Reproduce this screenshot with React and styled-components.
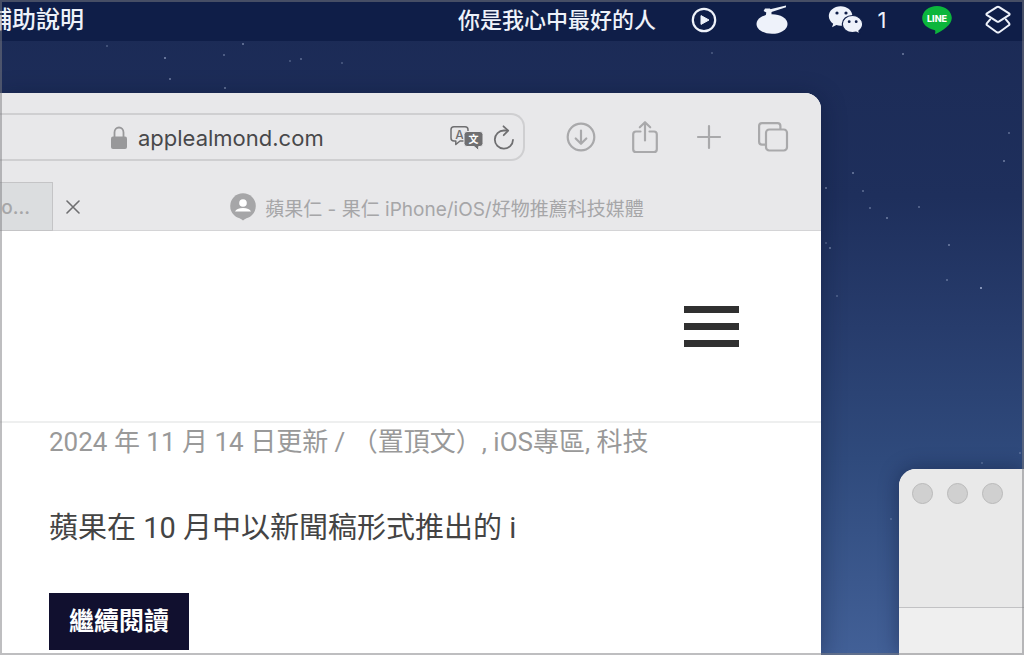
import styled, { createGlobalStyle } from 'styled-components';

const GlobalStyle = createGlobalStyle`
  * {
    box-sizing: border-box;
  }

  body {
    margin: 0;
    font-family: Inter, "Noto Sans CJK TC", sans-serif;
  }

  button {
    padding: 0;
    border: none;
    background: none;
    color: inherit;
    font: inherit;
    cursor: pointer;
  }

  svg {
    display: block;
  }
`;

// x, y, opacity
const stars = [
  [107, 46, 0.3], [165, 58, 0.6], [170, 79, 0.5], [224, 55, 0.4],
  [243, 44, 0.5], [225, 88, 0.5], [290, 61, 0.3], [301, 59, 0.4],
  [342, 63, 0.3], [712, 53, 0.3], [903, 54, 0.5], [1009, 133, 0.4],
  [1004, 161, 0.5], [853, 173, 0.5], [826, 188, 0.5], [863, 191, 0.4],
  [870, 208, 0.4], [887, 218, 0.5], [919, 207, 0.4], [949, 245, 0.5],
  [826, 243, 0.3], [830, 248, 0.5], [947, 280, 0.4], [981, 288, 0.8],
  [837, 296, 0.3], [982, 463, 0.3], [1020, 453, 0.3], [891, 519, 0.3],
];

const PlayIcon = () => (
  <svg width="26" height="26" viewBox="0 0 26 26" fill="none">
    <circle cx="13" cy="13" r="11.2" stroke="#eef2fa" strokeWidth="2.2" />
    <path d="M10 8.6 18 13l-8 4.4z" fill="#eef2fa" stroke="#eef2fa" strokeLinejoin="round" />
  </svg>
);

const BowlIcon = () => (
  <svg width="32" height="30" viewBox="0 0 32 30" fill="#eef2fa">
    <ellipse cx="16" cy="19" rx="15.5" ry="9.8" />
    <path d="M9 3.4h5l1.5 2.4v6H9.500l.8-4.400L7.600 6z" />
    <path d="M13 4.500 30 .4v1.800L14 7.600z" />
  </svg>
);

const WechatIcon = () => (
  <svg width="36" height="30" viewBox="0 0 36 30">
    <path
      d="M12.600 1.200C6 1.200.8 5.600.8 11.100c0 3.100 1.700 5.900 4.400 7.700L4 22.200l4.400-2.100c1.300.4 2.700.6 4.200.6 6.600 0 11.800-4.300 11.800-9.700S19.200 1.200 12.600 1.200z"
      fill="#eef2fa"
    />
    <path
      d="M24.500 10.500c-5.700 0-10.200 3.900-10.200 8.600s4.500 8.600 10.200 8.600c1.300 0 2.500-.2 3.600-.5l3.700 1.900-.9-3.200c2.300-1.600 3.800-4 3.800-6.800 0-4.700-4.500-8.600-10.200-8.600z"
      fill="#eef2fa"
      stroke="#0f1e48"
      strokeWidth="1.200"
    />
    <g fill="#0f1e48">
      <circle cx="9" cy="8" r="1.600" />
      <circle cx="18" cy="8" r="1.600" />
      <circle cx="21.200" cy="16.700" r="1.400" />
      <circle cx="28.200" cy="16.700" r="1.400" />
    </g>
  </svg>
);

const LineIcon = () => (
  <svg width="30" height="30" viewBox="0 0 30 30">
    <path
      d="M15 1C6.700 1 .2 6.400.2 13.100c0 5.800 5 10.700 12 11.800 1.100.2 1.300.9 1.100 2l-.2 1.300c-.1.700.4 1 1.100.600C20.500 25.600 29.800 20.300 29.800 13.100 29.800 6.400 23.300 1 15 1z"
      fill="#0cb63c"
    />
    <text x="15" y="16.500" textAnchor="middle" fontFamily="Inter, sans-serif" fontWeight="800" fontSize="9" fill="#fff">
      LINE
    </text>
  </svg>
);

const StackIcon = () => (
  <svg width="26" height="30" viewBox="0 0 26 30" fill="none" stroke="#eef2fa" strokeWidth="2" strokeLinejoin="round" strokeLinecap="round">
    <path d="M11.800 2.200 2 8.300q-1.200.9 0 1.800l9.800 6.200q1.200.7 2.400 0L24 10.100q1.200-.9 0-1.800l-9.800-6.100q-1.200-.7-2.400 0z" />
    <path d="M5.200 14.300 2 18.200q-1 1.200.2 2.100l9.600 6.900q1.200.8 2.400 0l9.600-6.900q1.200-.9.200-2.100l-3.200-3.900" />
  </svg>
);

const LockIcon = () => (
  <svg width="16" height="24" viewBox="0 0 16 24">
    <path d="M3.500 11V6.500a4.500 5 0 0 1 9 0V11" fill="none" stroke="#98989a" strokeWidth="1.800" />
    <rect y="10.500" width="16" height="12.500" rx="2" fill="#98989a" />
  </svg>
);

const TranslateIcon = () => (
  <svg width="34" height="26" viewBox="0 0 34 26">
    <path
      d="M4 1.800h11q3 0 3 3V13q0 3-3 3h-5l-4.200 3.500V16H4q-3 0-3-3V4.800q0-3 3-3z"
      fill="none"
      stroke="#6f6f71"
      strokeWidth="1.500"
      strokeLinejoin="round"
    />
    <text x="9.600" y="13.500" textAnchor="middle" fontFamily="Inter, sans-serif" fontWeight="500" fontSize="12" fill="#6f6f71">A</text>
    <path
      d="M17 6.500h13q3 0 3 3v9q0 3-3 3h-1.300v4L24 21.500h-7q-3 0-3-3v-9q0-3 3-3z"
      fill="#6f6f71"
      stroke="#e8e8ea"
      strokeWidth="1"
    />
    <text x="23.500" y="18" textAnchor="middle" fontFamily="'Noto Sans CJK TC', sans-serif" fontWeight="700" fontSize="10" fill="#fff">文</text>
  </svg>
);

const ReloadIcon = () => (
  <svg width="22" height="26" viewBox="0 0 22 26" fill="none" stroke="#6f6f71" strokeWidth="1.800" strokeLinecap="round" strokeLinejoin="round">
    <path d="M20 14.800a9.100 9.100 0 1 1-9-9.300h3.500" />
    <path d="m10.500 1.300 4.700 4.300-4.500 4.600" />
  </svg>
);

const DownloadIcon = () => (
  <svg width="32" height="32" viewBox="0 0 32 32" fill="none" stroke="#a9a9ab" strokeWidth="2.200" strokeLinecap="round" strokeLinejoin="round">
    <circle cx="16" cy="16" r="13.300" />
    <path d="M16 9.500v13M10.700 17.500l5.300 5.300 5.300-5.300" />
  </svg>
);

const ShareIcon = () => (
  <svg width="32" height="34" viewBox="0 0 32 34" fill="none" stroke="#a9a9ab" strokeWidth="2.200" strokeLinecap="round" strokeLinejoin="round">
    <path d="M11.500 11.500H7q-2.800 0-2.800 2.800v14.900q0 2.800 2.800 2.800h18q2.800 0 2.800-2.800V14.300q0-2.800-2.800-2.800h-4.500" />
    <path d="M16 20.500V2.300M10.800 7.300 16 2.200l5.200 5.100" />
  </svg>
);

const PlusIcon = () => (
  <svg width="32" height="32" viewBox="0 0 32 32" fill="none" stroke="#a9a9ab" strokeWidth="2.200" strokeLinecap="round">
    <path d="M16 5v22M5 16h22" />
  </svg>
);

const TabsIcon = () => (
  <svg width="32" height="32" viewBox="0 0 32 32" fill="none" stroke="#a9a9ab" strokeWidth="2.200" strokeLinejoin="round">
    <path d="M8.500 23.700H5q-2.900 0-2.900-2.900V5Q2.100 2.100 5 2.100h15.500q2.900 0 2.900 2.900v3" />
    <rect x="9" y="8.500" width="21" height="21" rx="3.200" />
  </svg>
);

const CloseIcon = () => (
  <svg width="14" height="14" viewBox="0 0 14 14" stroke="#6f6f71" strokeWidth="1.600" strokeLinecap="round">
    <path d="m1 1 12 12M13 1 1 13" />
  </svg>
);

const SiteIcon = () => (
  <svg width="26" height="28" viewBox="0 0 26 28">
    <circle cx="13" cy="13" r="12.800" fill="#a6a6a8" />
    <path d="m9 24.500 4 3 4-3z" fill="#a6a6a8" />
    <circle cx="13" cy="10" r="3.800" fill="#fff" />
    <path d="M5 18.600q1.500-3.600 8-3.600t8 3.600z" fill="#fff" />
  </svg>
);

export default function App() {
  return (
    <Desktop>
      <GlobalStyle />
      <Sky viewBox="0 0 1024 655" preserveAspectRatio="xMidYMid slice" aria-hidden="true">
        {stars.map(([x, y, o]) => (
          <circle key={`${x}-${y}`} cx={x} cy={y} r="1" fill="#c3cfec" opacity={o} />
        ))}
      </Sky>

      {/* menu bar */}
      <MenuBar>
        <HelpMenu>輔助說明</HelpMenu>
        <StatusItems>
          <StatusText>你是我心中最好的人</StatusText>
          <StatusButton $width={30} aria-label="播放"><PlayIcon /></StatusButton>
          <StatusButton $width={40} aria-label="Bowl"><BowlIcon /></StatusButton>
          <StatusButton $width={64} aria-label="WeChat">
            <WechatIcon />
            <span>1</span>
          </StatusButton>
          <StatusButton $width={30} aria-label="LINE"><LineIcon /></StatusButton>
          <StatusButton $width={26} aria-label="捷徑"><StackIcon /></StatusButton>
        </StatusItems>
      </MenuBar>

      <Stage>
        {/* browser */}
        <Browser>
          <Toolbar>
            <AddressBar>
              <LockIcon />
              <AddressInput type="text" aria-label="網址" defaultValue="applealmond.com" />
              <AddressActions>
                <button aria-label="翻譯"><TranslateIcon /></button>
                <button aria-label="重新載入"><ReloadIcon /></button>
              </AddressActions>
            </AddressBar>
            <ToolButtons>
              <ToolButton aria-label="下載"><DownloadIcon /></ToolButton>
              <ToolButton aria-label="分享"><ShareIcon /></ToolButton>
              <ToolButton aria-label="新增標籤頁"><PlusIcon /></ToolButton>
              <ToolButton aria-label="標籤頁總覽"><TabsIcon /></ToolButton>
            </ToolButtons>
          </Toolbar>
          <TabRow>
            <BackTab>no...</BackTab>
            <FrontTab>
              <CloseButton aria-label="關閉標籤頁"><CloseIcon /></CloseButton>
              <TabTitle>
                <SiteIcon />
                蘋果仁 - 果仁 iPhone/iOS/好物推薦科技媒體
              </TabTitle>
            </FrontTab>
          </TabRow>

          <PageHeader>
            <Hamburger aria-label="選單">
              <Bar />
              <Bar />
              <Bar />
            </Hamburger>
          </PageHeader>
          <Article>
            <Meta>2024 年 11 月 14 日更新 / （置頂文）, iOS專區, 科技</Meta>
            <Excerpt>蘋果在 10 月中以新聞稿形式推出的 i</Excerpt>
            <ReadMore href="#more">繼續閱讀</ReadMore>
          </Article>
        </Browser>

        {/* background window */}
        <SideWindow>
          <TitleBar>
            <Light aria-label="關閉" />
            <Light aria-label="縮到最小" />
            <Light aria-label="放大" />
          </TitleBar>
        </SideWindow>
      </Stage>
      <Frame />
    </Desktop>
  );
}

const Desktop = styled.div`
  position: relative;
  display: flex;
  flex-direction: column;
  min-height: 100vh;
  overflow: hidden;
  background: linear-gradient(#1b2a55 0%, #1e2f5c 30%, #273c6c 50%, #2f4a7c 70%, #426097 100%);
`;

const Sky = styled.svg`
  position: absolute;
  inset: 0;
  width: 100%;
  height: 100%;
`;

const MenuBar = styled.header`
  position: relative;
  display: flex;
  align-items: center;
  justify-content: space-between;
  height: 41px;
  padding: 0 13px 2px 0;
  background: #0f1e48;
  color: #eef2fa;
`;

/* runs off the left edge of the screen */
const HelpMenu = styled.button`
  margin-left: -12px;
  font-size: 24px;
  font-weight: 500;
  line-height: 38px;
  white-space: nowrap;
`;

const StatusItems = styled.div`
  display: flex;
  align-items: center;
  gap: 33px;
`;

const StatusText = styled.span`
  font-size: 22px;
  font-weight: 500;
  line-height: 38px;
  white-space: nowrap;
`;

const StatusButton = styled.button`
  display: flex;
  align-items: center;
  justify-content: center;
  gap: 14px;
  width: ${(props) => props.$width}px;
  font-size: 22px;
`;

const Stage = styled.main`
  position: relative;
  flex: 1;
  display: grid;
  grid-template-columns: minmax(0, 1fr) 125px;
  column-gap: 78px;
  padding-top: 52px;
`;

const Browser = styled.section`
  display: flex;
  flex-direction: column;
  background: #fff;
  border-radius: 0 16px 0 0;
  box-shadow: 0 4px 24px rgba(8, 16, 40, 0.4);
  overflow: hidden;
`;

const Toolbar = styled.div`
  display: flex;
  align-items: center;
  gap: 40px;
  padding: 20px 32px 21px 0;
  background: #e8e8ea;
`;

const AddressBar = styled.div`
  flex: 1;
  min-width: 0;
  display: flex;
  align-items: center;
  height: 48px;
  padding: 2px 8px 0 111px;
  border: 2px solid #cfcfd1;
  border-left: none;
  border-radius: 0 14px 14px 0;
`;

const AddressInput = styled.input`
  flex: 1;
  min-width: 0;
  margin-left: 11px;
  padding: 0;
  border: none;
  outline: none;
  background: none;
  color: #48484a;
  font-family: Inter, sans-serif;
  font-size: 22px;
`;

const AddressActions = styled.div`
  display: flex;
  align-items: center;
  gap: 9px;
`;

const ToolButtons = styled.div`
  display: flex;
  align-items: center;
  gap: 32px;
`;

const ToolButton = styled.button`
  width: 32px;
`;

const TabRow = styled.div`
  display: flex;
  height: 49px;
  background: #e8e8ea;
  color: #a6a6a8;
  font-size: 19px;
`;

const BackTab = styled.button`
  width: 53px;
  padding: 2px 22px 0 0;
  border: 1px solid #c4c4c6;
  border-left: none;
  background: #dbdddf;
  display: flex;
  align-items: center;
  justify-content: flex-end;
  font-weight: 500;
`;

const FrontTab = styled.div`
  flex: 1;
  display: grid;
  grid-template-columns: 40px 1fr 40px;
  align-items: center;
  padding-top: 2px;
  border-bottom: 1px solid #d4d4d6;
`;

const CloseButton = styled.button`
  justify-self: center;
`;

const TabTitle = styled.span`
  display: flex;
  align-items: center;
  justify-content: center;
  gap: 9px;
  white-space: nowrap;
`;

const PageHeader = styled.div`
  display: flex;
  align-items: center;
  justify-content: flex-end;
  height: 192px;
  padding-right: 82px;
  border-bottom: 2px solid #eeefef;
`;

const Hamburger = styled.button`
  display: flex;
  flex-direction: column;
  gap: 10px;
  width: 55px;
`;

const Bar = styled.span`
  height: 7px;
  background: #303030;
`;

const Article = styled.article`
  padding-left: 49px;
  font-family: Roboto, "Noto Sans CJK TC", sans-serif;
  white-space: nowrap;
`;

const Meta = styled.p`
  margin: 0;
  color: #999;
  font-size: 26px;
  line-height: 38px;
`;

const Excerpt = styled.p`
  margin: 46px 0 44px;
  color: #444;
  font-size: 29px;
  line-height: 42px;
`;

const ReadMore = styled.a`
  display: inline-block;
  padding: 0 20px;
  background: #11102f;
  color: #fff;
  font-size: 25px;
  font-weight: 700;
  line-height: 57px;
  text-decoration: none;
  vertical-align: top;
`;

const SideWindow = styled.section`
  align-self: end;
  height: 186px;
  background: #efefef;
  border-radius: 17px 0 0 0;
  box-shadow: 0 0 20px rgba(8, 16, 40, 0.4);
  overflow: hidden;
`;

const TitleBar = styled.div`
  display: flex;
  gap: 14px;
  height: 139px;
  padding: 14px 0 0 13px;
  background: #e9e9e9;
  border-bottom: 1px solid #c2c2c4;
`;

const Light = styled.button`
  flex: none;
  width: 21px;
  height: 21px;
  border: 1px solid #b9b9b9;
  border-radius: 50%;
  background: #d0d0d0;
`;

const Frame = styled.div`
  position: absolute;
  inset: 0;
  border: 2px solid rgba(125, 125, 130, 0.5);
  pointer-events: none;
`;
